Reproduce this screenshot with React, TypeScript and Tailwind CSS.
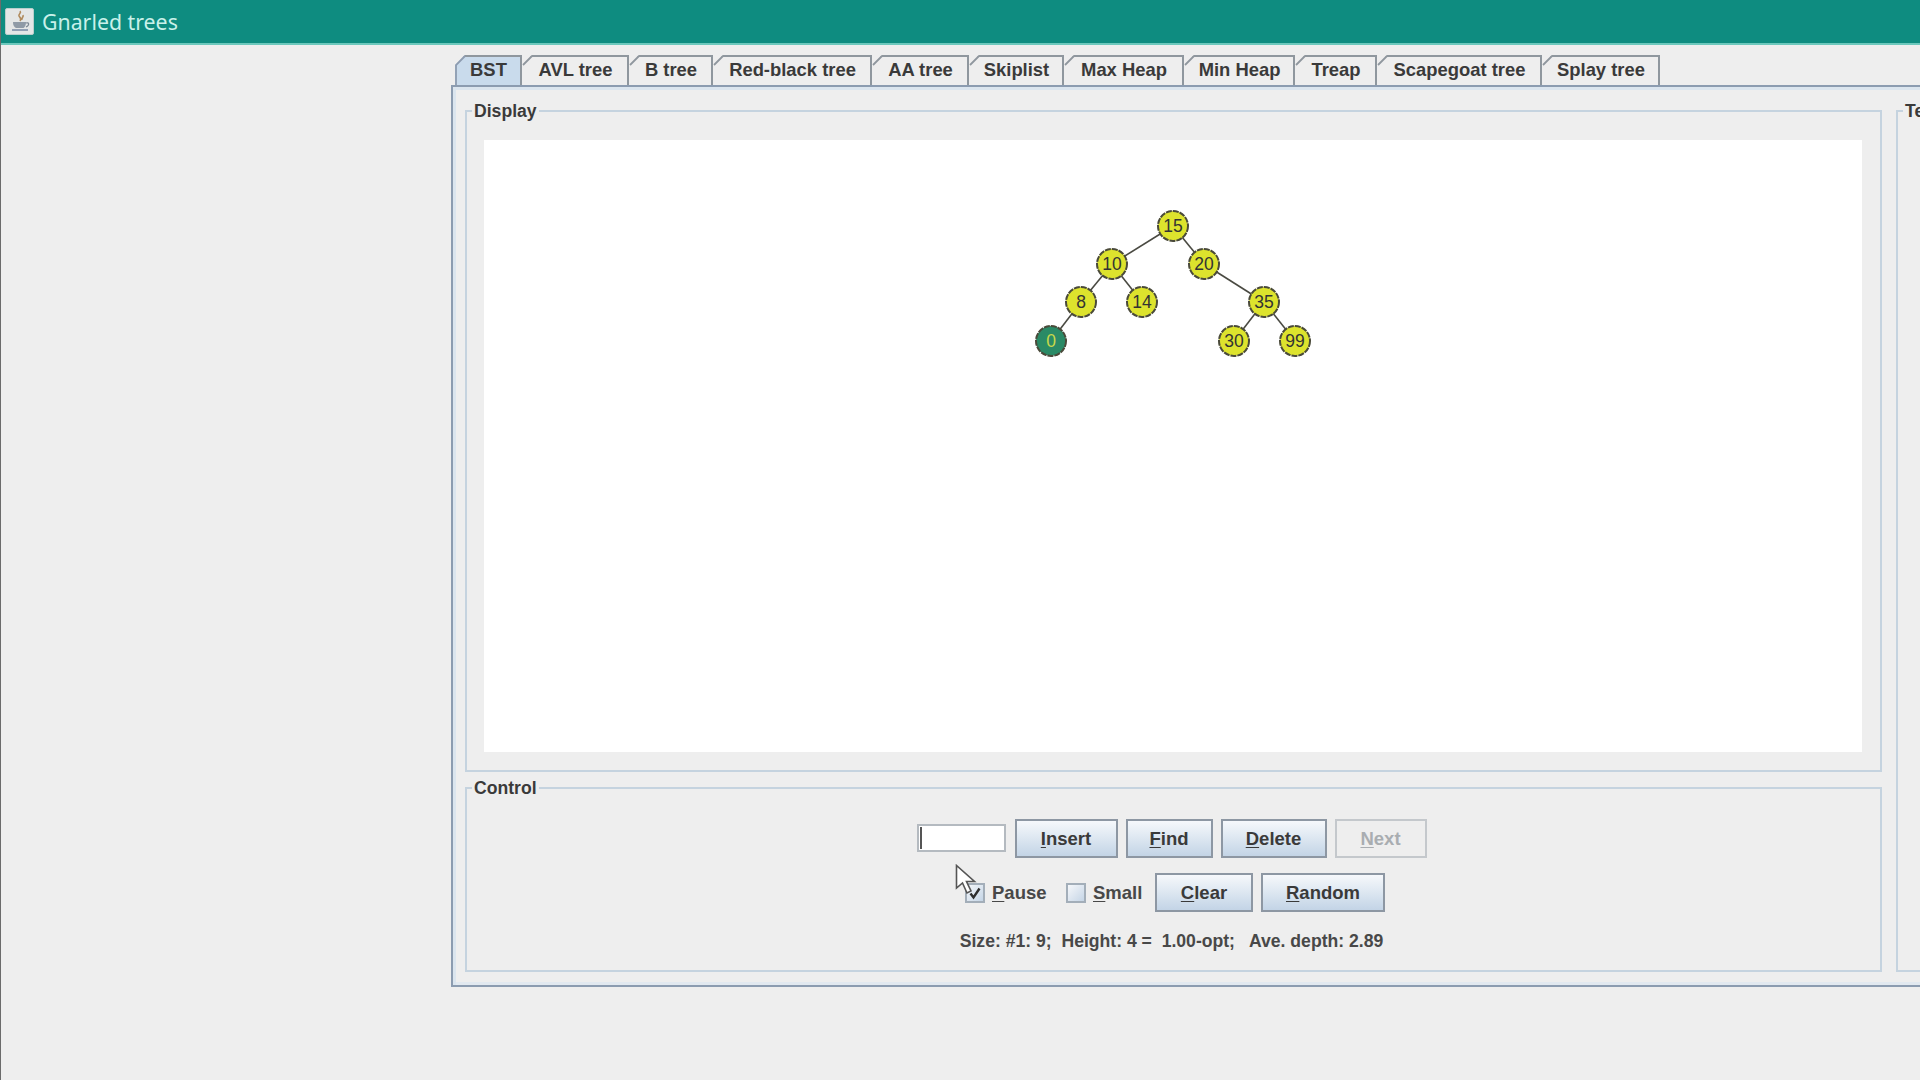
import React from 'react';

const FONT = "font-['Liberation_Sans',Arial,sans-serif]";

const tabs = [
  { label: 'BST', w: 67 },
  { label: 'AVL tree', w: 107 },
  { label: 'B tree', w: 84 },
  { label: 'Red-black tree', w: 159 },
  { label: 'AA tree', w: 97 },
  { label: 'Skiplist', w: 95 },
  { label: 'Max Heap', w: 120 },
  { label: 'Min Heap', w: 111 },
  { label: 'Treap', w: 82 },
  { label: 'Scapegoat tree', w: 165 },
  { label: 'Splay tree', w: 118 },
];

// node centres relative to the white canvas
const ox = 484;
const oy = 139;
const nodes = [
  { v: '15', x: 1173, y: 225 },
  { v: '10', x: 1112, y: 263 },
  { v: '20', x: 1204, y: 263 },
  { v: '8', x: 1081, y: 301 },
  { v: '14', x: 1142, y: 301 },
  { v: '35', x: 1264, y: 301 },
  { v: '0', x: 1051, y: 340, active: true },
  { v: '30', x: 1234, y: 340 },
  { v: '99', x: 1295, y: 340 },
];
const edges = [
  [0, 1], [0, 2], [1, 3], [1, 4], [2, 5], [3, 6], [5, 7], [5, 8],
];

function JavaIcon() {
  return (
    <div className="w-[29px] h-[27px] ml-[5px] rounded-[2px] bg-[#e4e6e6] border border-[#b9cfcc] flex items-center justify-center">
      <svg width="22" height="24" viewBox="0 0 22 24" fill="none">
        <path d="M11 1c2 2-2 3-1 5s3 2 1 5M14 5c1 2-2 3-1 5" stroke="#b08a5c" strokeWidth="1.6" />
        <path d="M4 12h13c0 4-2 6-3 6H8c-2 0-4-2-4-6z" fill="#8f9aa6" />
        <path d="M17 13c3-1 4 2 0 4" stroke="#7d8894" strokeWidth="1.2" />
        <path d="M3 20h16" stroke="#7d8fa8" strokeWidth="1.6" />
      </svg>
    </div>
  );
}

function Tab({ label, w, active }: { label: string; w: number; active?: boolean }) {
  return (
    <div style={{ width: w }} className="h-[30px] shrink-0 relative">
      <div
        className={`h-full border-t-2 border-r-2 border-[#8f979e] flex items-center justify-center pb-[3px] pl-[2px] text-[18.4px] font-bold text-[#3a3a3a] [clip-path:polygon(10px_0,100%_0,100%_100%,0_100%,0_10px)] ${
          active ? 'bg-[#c9dbec]' : 'bg-[#eeeeee]'
        }`}
      >
        {label}
      </div>
      {/* slanted corner of the Metal tab */}
      <svg className="absolute left-0 top-0" width="11" height="30" viewBox="0 0 11 30" fill="none">
        <path
          d={active ? 'M1 30V10L10 1' : 'M1 10L10 1'}
          stroke={active ? '#8d9cb0' : '#8f979e'}
          strokeWidth="1.8"
        />
      </svg>
    </div>
  );
}

function Titled({ title, className, children }: { title: string; className: string; children?: React.ReactNode }) {
  return (
    <div className={`relative border-2 border-[#c5d3df] ${className}`}>
      <span className="absolute left-[5px] top-[-12px] bg-[#eeeeee] px-[2px] text-[17.6px] leading-[22px] font-bold text-[#3a3a3a] whitespace-nowrap">
        {title}
      </span>
      {children}
    </div>
  );
}

function Btn({ label, u, w, disabled }: { label: string; u: number; w: number; disabled?: boolean }) {
  return (
    <div
      style={{ width: w }}
      className={`h-[39px] shrink-0 border-2 flex items-center justify-center text-[18.5px] font-bold ${
        disabled
          ? 'border-[#c4c8cc] text-[#a9adb1] bg-[#eeeeee]'
          : 'border-[#8d97a3] text-[#3a3a3a] bg-[linear-gradient(180deg,#f6f8fb_0%,#e4ecf4_35%,#c3d4e6_100%)]'
      }`}
    >
      <span>
        {label.slice(0, u)}
        <span className="underline underline-offset-2">{label[u]}</span>
        {label.slice(u + 1)}
      </span>
    </div>
  );
}

function Check({ label, checked, w }: { label: string; checked?: boolean; w: number }) {
  return (
    <div style={{ width: w }} className="flex items-center gap-[7px] shrink-0">
      <div className="w-[20px] h-[20px] border-2 border-[#a3aeb9] bg-[linear-gradient(135deg,#f5f7fa,#c5d5e6)] flex items-center justify-center">
        {checked && (
          <svg width="14" height="14" viewBox="0 0 14 14" fill="none">
            <path d="M2.5 7.5l3 4 6-9" stroke="#2e2e2e" strokeWidth="2.4" />
          </svg>
        )}
      </div>
      <span className="text-[18.5px] font-bold text-[#484848]">
        <span className="underline underline-offset-2">{label[0]}</span>
        {label.slice(1)}
      </span>
    </div>
  );
}

function Tree() {
  return (
    <svg width="1377" height="612" className="block">
      {edges.map(([a, b]) => (
        <line
          key={`${a}-${b}`}
          x1={nodes[a].x - ox}
          y1={nodes[a].y - oy}
          x2={nodes[b].x - ox}
          y2={nodes[b].y - oy}
          stroke="#4a4a42"
          strokeWidth="1.6"
        />
      ))}
      {nodes.map(n => (
        <g key={n.v}>
          <circle
            cx={n.x - ox}
            cy={n.y - oy}
            r="15"
            fill={n.active ? '#2a8a66' : '#dde32d'}
            stroke="#4a4a3a"
            strokeWidth="2"
            strokeDasharray="6 1"
          />
          <text
            x={n.x - ox}
            y={n.y - oy + 6}
            textAnchor="middle"
            fontSize="17.5"
            fill={n.active ? '#c8d84a' : '#333'}
            fontFamily="Liberation Sans, Arial, sans-serif"
          >
            {n.active ? '0' : n.v}
          </text>
        </g>
      ))}
    </svg>
  );
}

export default function App() {
  return (
    <div className={`w-[1920px] h-[1080px] overflow-hidden bg-[#eeeeee] border-l border-l-[#6b6b6b] flex flex-col relative ${FONT}`}>
      <div className="h-[45px] shrink-0 bg-[#0e8c80] border-b-2 border-[#6cc8bc] flex items-center gap-[8px] ml-[-1px]">
        <JavaIcon />
        <span className="font-['Noto_Sans',sans-serif] text-[21.3px] text-[#c9f1ea]">Gnarled trees</span>
      </div>

      <div className="pl-[450px] pt-[10px] flex-1 overflow-hidden">
        <div className="flex pl-[4px] h-[30px]">
          {tabs.map((t, i) => (
            <Tab key={t.label} label={t.label} w={t.w} active={i === 0} />
          ))}
        </div>

        <div className="w-[1469px] h-[902px] border-l-2 border-t-2 border-b-2 border-[#8c9cb0] bg-[#eeeeee] shadow-[inset_3px_3px_0_#dbe5ee,inset_0_-3px_0_#e2e9f0] pl-[12px] pt-[23px] flex gap-[14px] overflow-hidden">
          <div className="w-[1417px] shrink-0 flex flex-col gap-[15px]">
            <Titled title="Display" className="h-[662px] pl-[17px] pr-[18px] pt-[28px]">
              <div className="w-[1378px] h-[612px] bg-white">
                <Tree />
              </div>
            </Titled>
            <Titled title="Control" className="h-[185px] pt-[30px] flex flex-col items-center">
              <div className="flex items-center gap-[8px] ml-[-4px]">
                <div className="w-[89px] h-[28px] mb-[2px] mr-[1px] bg-white border-2 border-[#b4bac0] flex items-center pl-[1px]">
                  <div className="w-[2px] h-[22px] bg-[#555]" />
                </div>
                <Btn label="Insert" u={0} w={103} />
                <Btn label="Find" u={0} w={87} />
                <Btn label="Delete" u={0} w={106} />
                <Btn label="Next" u={0} w={92} disabled />
              </div>
              <div className="flex items-center mt-[15px] ml-[3px]">
                <Check label="Pause" checked w={101} />
                <Check label="Small" w={89} />
                <div className="flex gap-[8px]">
                  <Btn label="Clear" u={0} w={98} />
                  <Btn label="Random" u={0} w={124} />
                </div>
              </div>
              <div className="mt-[16px] ml-[-4px] text-[17.6px] font-bold text-[#484848] whitespace-pre">
                {'Size: #1: 9;  Height: 4 =  1.00-opt;   Ave. depth: 2.89'}
              </div>
            </Titled>
          </div>
          <Titled title="Te" className="w-[60px] h-[862px] shrink-0 border-r-0" />
        </div>
      </div>

      {/* mouse cursor over the Pause checkbox */}
      <svg className="absolute left-[954px] top-[864px]" width="22" height="32" viewBox="0 0 22 32">
        <path d="M1.5 1.500V24l6-5 4.500 10 4-2-4.500-9.500h8z" fill="#fff" stroke="#555" strokeWidth="1.6" />
      </svg>
    </div>
  );
}
